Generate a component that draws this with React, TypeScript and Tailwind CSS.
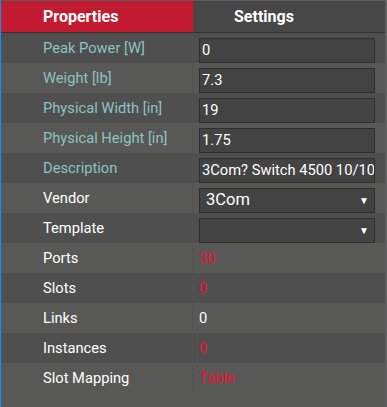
import { ReactNode } from "react";

type Row = {
  label: string;
  teal?: boolean;
  kind: "input" | "select" | "text";
  value: string;
  red?: boolean;
};

const rows: Row[] = [
  { label: "Peak Power [W]", teal: true, kind: "input", value: "0" },
  { label: "Weight [lb]", teal: true, kind: "input", value: "7.3" },
  { label: "Physical Width [in]", teal: true, kind: "input", value: "19" },
  { label: "Physical Height [in]", teal: true, kind: "input", value: "1.75" },
  { label: "Description", teal: true, kind: "input", value: "3Com? Switch 4500 10/100 24-Port" },
  { label: "Vendor", kind: "select", value: "3Com" },
  { label: "Template", kind: "select", value: "" },
  { label: "Ports", kind: "text", value: "30", red: true },
  { label: "Slots", kind: "text", value: "0", red: true },
  { label: "Links", kind: "text", value: "0" },
  { label: "Instances", kind: "text", value: "0", red: true },
  { label: "Slot Mapping", kind: "text", value: "Table", red: true },
];

const Box = ({ children }: { children: ReactNode }) => (
  <div className="flex h-[25px] w-[176px] items-center overflow-hidden whitespace-nowrap border border-[#2e2e2e] bg-[#434343] text-white">
    {children}
  </div>
);

export default function App() {
  return (
    <div
      className="flex h-[407px] w-[387px] flex-col border-l border-l-[#2a8ad6] border-r-2 border-r-[#5e5e5e] border-t border-t-[#5a5a5a] bg-[#575757] text-[14.7px]"
      style={{ fontFamily: "Roboto, 'Liberation Sans', sans-serif" }}
    >
      <div className="flex h-[32px] border-b border-b-[#333333] text-[16px] font-bold text-white">
        <div className="flex w-[192px] items-center bg-[#c21a31] pl-[42px]">Properties</div>
        <div className="flex flex-1 items-center bg-[#474747] pl-[41px]">Settings</div>
      </div>
      {rows.map((r, i) => (
        <div
          key={r.label}
          className={`flex h-[30px] ${i % 2 === 0 ? "bg-[#4f4f4f]" : "bg-[#585856]"}`}
        >
          <div
            className={`flex w-[192px] items-center border-r border-r-[#525252] pl-[42px] ${
              r.teal ? "text-[#8cc3c3]" : "text-white"
            }`}
          >
            {r.label}
          </div>
          <div className={`flex flex-1 pl-[6px] ${r.kind === "text" ? "items-center" : "items-end"}`}>
            {r.kind === "input" && (
              <Box>
                <span className="pl-[2px]">{r.value}</span>
              </Box>
            )}
            {r.kind === "select" && (
              <Box>
                <span className="flex-1 pl-[6px] text-[16.5px]">{r.value}</span>
                <span className="pr-[5px] text-[10px]">▼</span>
              </Box>
            )}
            {r.kind === "text" && (
              <span className={r.red ? "text-[#ef1230]" : "text-white"}>{r.value}</span>
            )}
          </div>
        </div>
      ))}
      <div className="flex-1 bg-[#585856]" />
    </div>
  );
}
